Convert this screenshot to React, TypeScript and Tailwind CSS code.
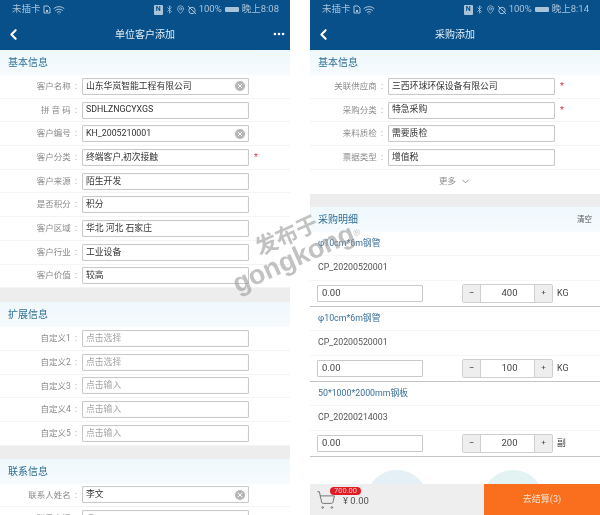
import { Bluetooth, ChevronDown, ChevronLeft, Ellipsis, MapPin, ShoppingCart, Wifi, X } from "lucide-react";

const FONT = "font-['Roboto','Noto_Sans_CJK_SC',sans-serif]";

function StatusBar({ time }: { time: string }) {
  return (
    <div className="flex h-[19px] items-center pl-3 pr-[11px] text-[9.5px] text-[#a9c3d8]">
      <span>未插卡</span>
      <svg width="8" height="9" viewBox="0 0 8 9" className="ml-[2px]" fill="none" stroke="currentColor">
        <path d="M1 1h4l2 2v5H1z" />
        <path d="M3 5h2v2H3z" fill="currentColor" stroke="none" />
      </svg>
      <Wifi size={12} className="ml-[2px]" />
      <span className="ml-auto flex h-[10px] w-[9px] items-center justify-center rounded-[1px] bg-[#a9c3d8] text-[7px] font-bold text-[#07508a]">N</span>
      <Bluetooth size={9} className="ml-[2px]" />
      <MapPin size={9} className="ml-[2px]" />
      <svg width="10" height="10" viewBox="0 0 10 10" className="ml-[2px]" fill="none" stroke="currentColor">
        <circle cx="5" cy="5.500" r="3.200" />
        <path d="M1 1l8 8" />
      </svg>
      <span className="ml-[2px]">100%</span>
      <span className="ml-[3px] h-[5px] w-[14px] rounded-[1px] bg-[#a9c3d8]" />
      <span className="ml-[3px]">{time}</span>
    </div>
  );
}

function Header({ title, more }: { title: string; more?: boolean }) {
  return (
    <div className="bg-[#07508a]">
      <StatusBar time={title === "采购添加" ? "晚上8:14" : "晚上8:08"} />
      <div className="relative flex h-[31px] items-center justify-center pb-[1px] text-[10px] text-[#e4eef5]">
        <ChevronLeft size={17} strokeWidth={3} className="absolute left-[5px] text-white" />
        {title}
        {more && <Ellipsis size={14} strokeWidth={2.5} className="absolute right-[4px] text-white" />}
      </div>
    </div>
  );
}

function SectionTitle({ children, action }: { children: string; action?: string }) {
  return (
    <div className="flex h-[25px] items-center justify-between bg-gradient-to-b from-[#eff8fc] to-[#f6fbfd] pl-2 pr-2 text-[10px] text-[#2f6f98]">
      {children}
      {action && <span className="text-[7.5px] text-[#555]">{action}</span>}
    </div>
  );
}

interface FieldProps {
  label: string;
  value: string;
  clear?: boolean;
  required?: boolean;
  placeholder?: boolean;
  labelWidth: string;
}

function Field({ label, value, clear, required, placeholder, labelWidth }: FieldProps) {
  return (
    <div className="flex h-[23.7px] items-center border-b border-[#f4f4f4]">
      <span className={`${labelWidth} shrink-0 whitespace-pre text-right text-[8.5px] text-[#8a8a8a]`}>{label}  :</span>
      <div className={`ml-[5px] flex h-[17px] w-[167px] items-center justify-between rounded-[1px] border border-[#c9c9c9] pl-[3px] pr-[3px] text-[8.8px] shadow-[inset_0_0_1px_#ddd] ${placeholder ? "text-[#a5a5a5]" : "text-[#333]"}`}>
        {value}
        {clear && (
          <span className="flex h-[10px] w-[10px] items-center justify-center rounded-full bg-[#b4b4b4] text-white">
            <X size={8} strokeWidth={3} />
          </span>
        )}
      </div>
      {required && <span className="ml-[5px] text-[9px] leading-none text-[#d9363e]">*</span>}
    </div>
  );
}

function CustomerForm() {
  const w = "w-[77px]";
  return (
    <div className="h-[515px] w-[290px] shrink-0 overflow-hidden">
      <Header title="单位客户添加" more />
      <SectionTitle>基本信息</SectionTitle>
      <Field labelWidth={w} label="客户名称" value="山东华岚智能工程有限公司" clear />
      <Field labelWidth={w} label="拼 音 码" value="SDHLZNGCYXGS" />
      <Field labelWidth={w} label="客户编号" value="KH_2005210001" clear />
      <Field labelWidth={w} label="客户分类" value="终端客户,初次接触" required />
      <Field labelWidth={w} label="客户来源" value="陌生开发" />
      <Field labelWidth={w} label="是否积分" value="积分" />
      <Field labelWidth={w} label="客户区域" value="华北 河北 石家庄" />
      <Field labelWidth={w} label="客户行业" value="工业设备" />
      <Field labelWidth={w} label="客户价值" value="较高" />
      <div className="h-[14px] bg-[#ededed]" />
      <SectionTitle>扩展信息</SectionTitle>
      <Field labelWidth={w} label="自定义1" value="点击选择" placeholder />
      <Field labelWidth={w} label="自定义2" value="点击选择" placeholder />
      <Field labelWidth={w} label="自定义3" value="点击输入" placeholder />
      <Field labelWidth={w} label="自定义4" value="点击输入" placeholder />
      <Field labelWidth={w} label="自定义5" value="点击输入" placeholder />
      <div className="h-[13px] bg-[#ededed]" />
      <SectionTitle>联系信息</SectionTitle>
      <Field labelWidth={w} label="联系人姓名" value="李文" clear />
      <Field labelWidth={w} label="联系电话" value="" clear />
    </div>
  );
}

function OrderItem({ name, code, qty, unit }: { name: string; code: string; qty: string; unit: string }) {
  return (
    <div className="border-b border-[#c4c4c4]">
      <div className="flex h-[24px] items-center border-b border-[#f6f6f6] pl-2 text-[8.8px] text-[#3a7099]">{name}</div>
      <div className="flex h-[25px] items-center border-b border-[#f6f6f6] pl-2 text-[8.8px] text-[#555]">{code}</div>
      <div className="flex h-[25px] items-center pl-[7px] text-[9.5px] text-[#444]">
        <div className="flex h-[17px] w-[106px] items-center rounded-[1px] border border-[#c9c9c9] pl-1">0.00</div>
        <div className="ml-[39px] flex h-[19px] w-[91px] items-stretch rounded-[2px] border border-[#cfcfcf]">
          <span className="flex w-[17px] items-center justify-center bg-[#eeeeee]">−</span>
          <span className="flex flex-1 items-center justify-center border-x border-[#cfcfcf] pl-[4px]">{qty}</span>
          <span className="flex w-[17px] items-center justify-center bg-[#eeeeee] text-[8px]">+</span>
        </div>
        <span className="ml-1 text-[8.8px]">{unit}</span>
      </div>
    </div>
  );
}

function PurchaseForm() {
  const w = "w-[73px]";
  return (
    <div className="relative flex h-[515px] w-[290px] shrink-0 flex-col overflow-hidden">
      <Header title="采购添加" />
      <SectionTitle>基本信息</SectionTitle>
      <Field labelWidth={w} label="关联供应商" value="三西环球环保设备有限公司" required />
      <Field labelWidth={w} label="采购分类" value="特急采购" required />
      <Field labelWidth={w} label="来料质检" value="需要质检" />
      <Field labelWidth={w} label="票据类型" value="增值税" />
      <div className="flex h-[24px] items-center justify-center gap-1 text-[8.5px] text-[#8a8a8a]">
        更多 <ChevronDown size={11} />
      </div>
      <div className="h-[13px] bg-[#ededed]" />
      <SectionTitle action="清空">采购明细</SectionTitle>
      <OrderItem name="φ10cm*6m钢管" code="CP_20200520001" qty="400" unit="KG" />
      <OrderItem name="φ10cm*6m钢管" code="CP_20200520001" qty="100" unit="KG" />
      <OrderItem name="50*1000*2000mm钢板" code="CP_20200214003" qty="200" unit="副" />
      <div className="absolute left-[56px] top-[470px] h-[62px] w-[62px] rounded-full bg-[#e5eff6]" />
      <div className="absolute left-[172px] top-[470px] h-[62px] w-[62px] rounded-full bg-[#e3f3f4]" />
      <div className="relative mt-auto flex h-[31px]">
        <div className="relative flex flex-1 items-center bg-[#eeeeee] pl-[33px] pt-[3px] text-[9.5px] text-[#555]">
          <ShoppingCart size={20} strokeWidth={1.2} className="absolute left-[6px] top-[6px] text-[#777]" />
          <span className="absolute left-[20px] top-[3px] h-[8px] rounded-full bg-[#e01b22] px-[4px] text-[7.5px] leading-[8px] text-[#f6c9c9]">700.00</span>
          ¥ 0.00
        </div>
        <div className="flex w-[116px] items-center justify-center bg-[#f96f1d] text-[9px] text-[#ffe3cf]">去结算(3)</div>
      </div>
    </div>
  );
}

export default function App() {
  return (
    <div className={`${FONT} relative flex h-[515px] w-[600px] gap-5 overflow-hidden bg-white blur-[0.3px]`}>
      <CustomerForm />
      <PurchaseForm />
      <div className="absolute left-[222px] top-[224px] w-[140px] -rotate-[24deg] text-center font-['Liberation_Sans','Noto_Sans_CJK_SC',sans-serif] font-bold leading-none text-[#999999]/60">
        <div className="text-[22px]">发布于</div>
        <div className="text-[27px] leading-[0.9]">
          gongkong<sup className="text-[9px] font-normal">®</sup>
        </div>
      </div>
    </div>
  );
}
